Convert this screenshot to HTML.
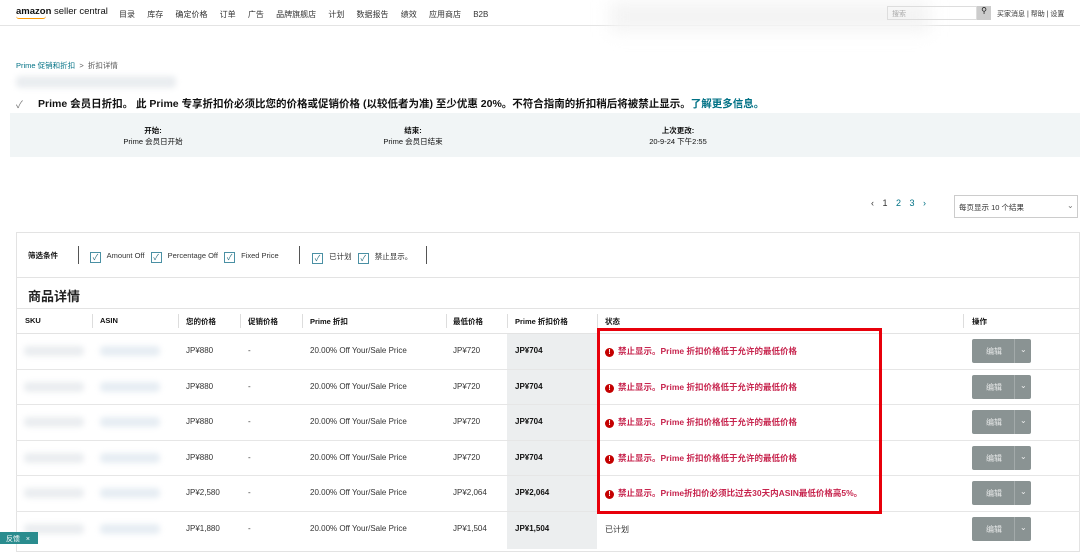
<!DOCTYPE html>
<html><head><meta charset="utf-8"><style>
*{margin:0;padding:0;box-sizing:border-box}
body{width:1080px;height:544px;overflow:hidden;background:#fff;font-family:"Liberation Sans","Noto Sans CJK SC",sans-serif;color:#111;position:relative}
.a{position:absolute;white-space:nowrap}
.s{font-size:8px}
.blur{position:absolute;background:#eaedf0;filter:blur(3px);border-radius:4px}
.btn{position:absolute;left:972px;width:59px;height:24px;background:#8a9393;border-radius:2px}
.btn span{position:absolute;left:14px;top:7px;font-size:8px;color:#e8eaea}
.btn i{position:absolute;left:42px;top:0;width:1px;height:24px;background:#a3aaaa}
.btn b{position:absolute;left:48px;top:6px;font-size:8px;color:#eee;font-weight:normal}
.err{color:#c7254e;font-size:8.5px;font-weight:bold;line-height:10px}
.dot{display:inline-block;width:9px;height:9px;border-radius:50%;background:#c40000;color:#fff;font-size:7px;text-align:center;line-height:9px;margin-right:4px;vertical-align:0}
.cb{display:inline-block;width:11px;height:11px;border:1px solid #4a90a4;font-size:8px;line-height:9px;text-align:center;color:#2a6f80;margin:0 4px 0 4px;vertical-align:-2px}
</style></head><body>
<div class="a" style="left:16px;top:6px;font-size:9.5px;"><b>amazon</b> seller central</div>
<div class="a" style="left:16px;top:16px;width:30px;height:3px;border-bottom:1.5px solid #f90;border-radius:0 0 10px 10px"></div>
<div class="a s" style="left:119px;top:9px;color:#333;word-spacing:10px">目录 库存 确定价格 订单 广告 品牌旗舰店 计划 数据报告 绩效 应用商店 B2B</div>
<div class="a" style="left:0;top:25px;width:1080px;height:1px;background:#e4e4e4"></div>
<div class="a" style="left:610px;top:2px;width:320px;height:30px;background:#f4f4f4;filter:blur(8px)"></div>
<div class="a" style="left:887px;top:6px;width:90px;height:14px;border:1px solid #ddd"></div>
<div class="a" style="left:892px;top:9px;font-size:7px;color:#aaa">搜索</div>
<div class="a" style="left:977px;top:6px;width:14px;height:14px;background:#ccc;font-size:8px;text-align:center">⚲</div>
<div class="a" style="left:997px;top:9px;font-size:7px;color:#333">买家消息 | 帮助 | 设置</div>
<div class="a" style="left:16px;top:60px;font-size:7.5px;color:#007185">Prime 促销和折扣 <span style="color:#555">&nbsp;&gt;&nbsp; 折扣详情</span></div>
<div class="blur" style="left:16px;top:76px;width:160px;height:12px"></div>
<div class="a" style="left:16px;top:96px;font-size:10px;color:#777">✓</div>
<div class="a" style="left:38px;top:96px;font-size:10.5px;font-weight:bold">Prime 会员日折扣。 此 Prime 专享折扣价必须比您的价格或促销价格 (以较低者为准) 至少优惠 20%。不符合指南的折扣稍后将被禁止显示。<span style="color:#007185">了解更多信息。</span></div>
<div class="a" style="left:10px;top:113px;width:1070px;height:44px;background:#f1f5f6"></div>
<div class="a" style="left:123px;top:125px;font-size:7.5px;text-align:center;width:60px"><b>开始:</b><br>Prime 会员日开始</div>
<div class="a" style="left:383px;top:125px;font-size:7.5px;text-align:center;width:60px"><b>结束:</b><br>Prime 会员日结束</div>
<div class="a" style="left:643px;top:125px;font-size:7.5px;text-align:center;width:70px"><b>上次更改:</b><br>20-9-24 下午2:55</div>
<div class="a" style="left:871px;top:198px;font-size:9px;color:#007185;word-spacing:6px"><span style="color:#333">‹</span> <span style="color:#333">1</span> 2 3 ›</div>
<div class="a" style="left:954px;top:195px;width:124px;height:23px;border:1px solid #ccc"></div>
<div class="a" style="left:959px;top:202px;font-size:7.5px;color:#333">每页显示 10 个结果</div>
<div class="a" style="left:1067px;top:201px;font-size:8px;color:#777">⌄</div>
<div class="a" style="left:16px;top:232px;width:1064px;height:320px;border:1px solid #e3e3e3"></div>
<div class="a" style="left:28px;top:250px;font-size:7.5px;font-weight:bold">筛选条件</div>
<div class="a" style="left:78px;top:246px;width:1px;height:18px;background:#555"></div>
<div class="a" style="left:86px;top:251px;font-size:7.5px;color:#333"><span class="cb">✓</span> Amount Off <span class="cb">✓</span> Percentage Off <span class="cb">✓</span> Fixed Price</div>
<div class="a" style="left:299px;top:246px;width:1px;height:18px;background:#555"></div>
<div class="a" style="left:308px;top:251px;font-size:7.5px;color:#333"><span class="cb">✓</span> 已计划 <span class="cb">✓</span> 禁止显示。</div>
<div class="a" style="left:426px;top:246px;width:1px;height:18px;background:#555"></div>
<div class="a" style="left:16px;top:277px;width:1064px;height:1px;background:#e3e3e3"></div>
<div class="a" style="left:28px;top:286px;font-size:13px;font-weight:bold;color:#222">商品详情</div>
<div class="a" style="left:16px;top:308px;width:1064px;height:1px;background:#e3e3e3"></div>
<div class="a" style="left:507px;top:309px;width:90px;height:240px;background:#eceeef"></div>
<div class="a" style="left:507px;top:309px;width:90px;height:24px;background:#fff"></div>
<div class="a" style="left:16px;top:333px;width:1064px;height:1px;background:#e3e3e3"></div>
<div class="a" style="left:0;top:316px;font-size:7.5px;font-weight:bold;width:1080px;height:12px">
<span class="a" style="left:25px">SKU</span><span class="a" style="left:100px">ASIN</span><span class="a" style="left:186px">您的价格</span><span class="a" style="left:248px">促销价格</span><span class="a" style="left:310px">Prime 折扣</span><span class="a" style="left:453px">最低价格</span><span class="a" style="left:515px">Prime 折扣价格</span><span class="a" style="left:605px">状态</span><span class="a" style="left:972px">操作</span>
</div>
<div class="a" style="left:92px;top:314px;width:1px;height:14px;background:#ddd"></div>
<div class="a" style="left:178px;top:314px;width:1px;height:14px;background:#ddd"></div>
<div class="a" style="left:240px;top:314px;width:1px;height:14px;background:#ddd"></div>
<div class="a" style="left:302px;top:314px;width:1px;height:14px;background:#ddd"></div>
<div class="a" style="left:446px;top:314px;width:1px;height:14px;background:#ddd"></div>
<div class="a" style="left:507px;top:314px;width:1px;height:14px;background:#ddd"></div>
<div class="a" style="left:597px;top:314px;width:1px;height:14px;background:#ddd"></div>
<div class="a" style="left:963px;top:314px;width:1px;height:14px;background:#ddd"></div>
<div id="rows"></div>
<script>
var d=[["JP¥880","JP¥720","JP¥704",1],["JP¥880","JP¥720","JP¥704",1],["JP¥880","JP¥720","JP¥704",1],["JP¥880","JP¥720","JP¥704",1],["JP¥2,580","JP¥2,064","JP¥2,064",2],["JP¥1,880","JP¥1,504","JP¥1,504",0]];
var h="";
for(var i=0;i<6;i++){var c=351+i*35.5,t=c-5;var r=d[i];
h+='<div class="blur" style="left:24px;top:'+(c-5)+'px;width:60px;height:10px"></div>';
h+='<div class="blur" style="left:100px;top:'+(c-5)+'px;width:60px;height:10px;background:#e6edf3"></div>';
h+='<div class="a" style="left:186px;top:'+t+'px;font-size:8px;color:#333">'+r[0]+'</div>';
h+='<div class="a" style="left:248px;top:'+t+'px;font-size:8px;color:#333">-</div>';
h+='<div class="a" style="left:310px;top:'+t+'px;font-size:8px;color:#333">20.00% Off Your/Sale Price</div>';
h+='<div class="a" style="left:453px;top:'+t+'px;font-size:8px;color:#333">'+r[1]+'</div>';
h+='<div class="a" style="left:515px;top:'+t+'px;font-size:8px;font-weight:bold">'+r[2]+'</div>';
var st=r[3]==1?'<span class="err"><span class="dot">!</span>禁止显示。Prime 折扣价格低于允许的最低价格</span>':r[3]==2?'<span class="err"><span class="dot">!</span>禁止显示。Prime折扣价必须比过去30天内ASIN最低价格高5%。</span>':'<span style="font-size:8px;color:#333">已计划</span>';
h+='<div class="a" style="left:605px;top:'+(c-6)+'px;line-height:10px">'+st+'</div>';
h+='<div class="btn" style="top:'+(c-12)+'px"><span>编辑</span><i></i><b>⌄</b></div>';
if(i<5)h+='<div class="a" style="left:16px;top:'+(c+17.5)+'px;width:1064px;height:1px;background:#e6e6e6"></div>';
}
document.getElementById("rows").innerHTML=h;
</script>
<div class="a" style="left:597px;top:328px;width:285px;height:186px;border:3px solid #e8000b"></div>
<div class="a" style="left:0;top:532px;width:38px;height:12px;background:#2a8c8e;font-size:7px;color:#fff;padding:2px 0 0 6px">反馈 &nbsp;&nbsp;×</div>
</body></html>
